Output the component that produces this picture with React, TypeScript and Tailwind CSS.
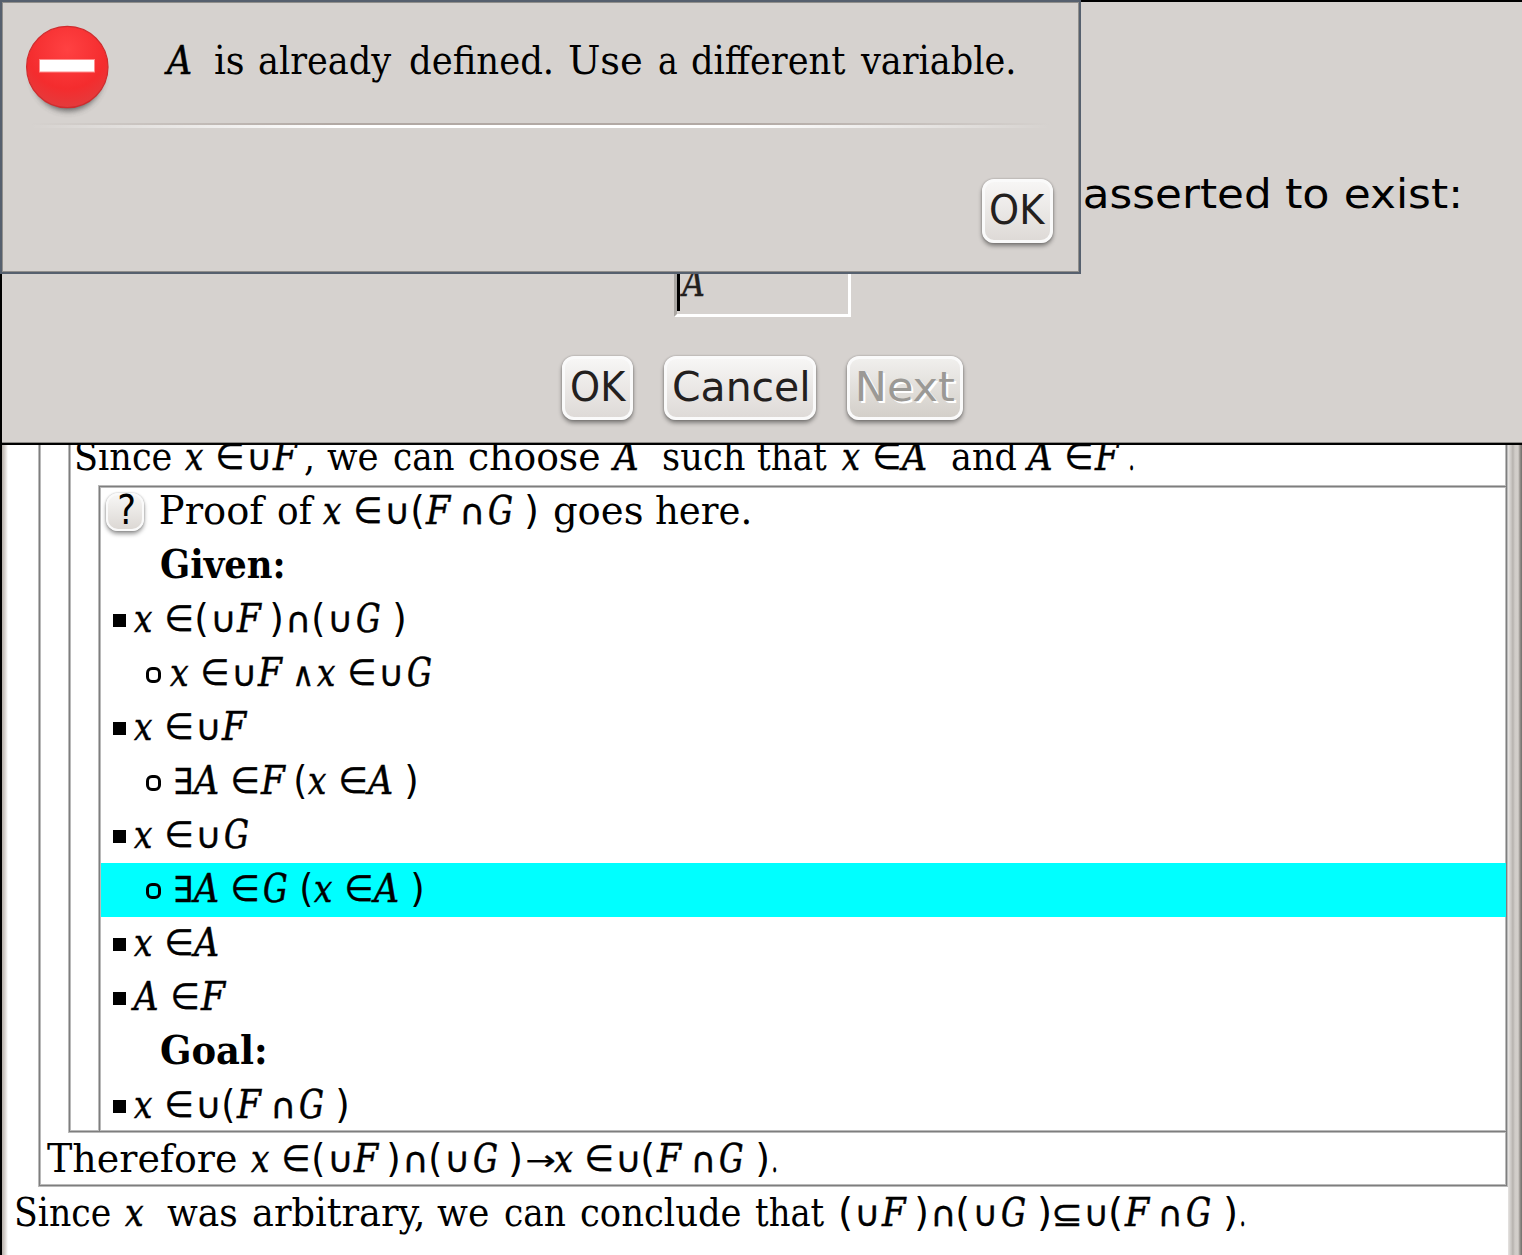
import React from "react";

type Kind = "serif" | "italic" | "bold" | "sans" | "symbol";
/** text, ink left edge, ink right edge, kind */
type Run = [string, number, number, Kind?];

const FONT: Record<Kind, string> = {
  serif: "40px 'DejaVu Serif Condensed', 'DejaVu Serif', serif",
  italic: "italic 40px 'DejaVu Serif Condensed', 'DejaVu Serif', serif",
  bold: "bold 40px 'DejaVu Serif Condensed', 'DejaVu Serif', serif",
  sans: "40px 'DejaVu Sans', sans-serif",
  symbol: "40px 'DejaVu Sans', sans-serif",
};

/** ink extents of math symbols: height above and depth below the baseline */
const EXTENT: Record<string, [number, number]> = {
  "∈": [27, 0],
  "∃": [27, 0],
  "∪": [21, 0],
  "∩": [21, 0],
  "∧": [20, 0],
  "⊆": [21.5, 0],
  "→": [17, -4],
  "(": [29.5, 6],
  ")": [29.5, 6],
};

const ITALIC = "xAFG";
const ctx = document.createElement("canvas").getContext("2d")!;

function kindOf(text: string): Kind {
  if (EXTENT[text]) return "symbol";
  if (text.length === 1 && ITALIC.includes(text)) return "italic";
  return "serif";
}

function strokeOf(text: string, kind: Kind): string {
  if (kind === "italic") return "[-webkit-text-stroke:0.5px_currentColor]";
  if (kind === "symbol" && text !== "(" && text !== ")") return "[-webkit-text-stroke:0.5px_currentColor]";
  return "";
}

function Line({ runs, from = 0, className = "" }: { runs: Run[]; from?: number; className?: string }) {
  let pen = from;
  return (
    <div className={"flex h-[54px] whitespace-pre " + className}>
      {runs.map(([text, l, r, k], i) => {
        const kind = k ?? kindOf(text);
        ctx.font = FONT[kind];
        const m = ctx.measureText(text);
        const a = Math.round(m.fontBoundingBoxAscent);
        const d = Math.round(m.fontBoundingBoxDescent);
        const base = (54 - a - d) / 2 + a;
        const sx = (r - l) / (m.actualBoundingBoxLeft + m.actualBoundingBoxRight);
        let sy = 1;
        let ty = 38 - base;
        const e = kind === "symbol" ? EXTENT[text] : undefined;
        if (e) {
          sy = (e[0] + e[1]) / (m.actualBoundingBoxAscent + m.actualBoundingBoxDescent);
          ty += e[1] - m.actualBoundingBoxDescent * sy;
        }
        const gap = l - pen;
        pen = r;
        return (
          <span key={i} className="block h-[54px] shrink-0 leading-[54px]" style={{ width: r - l, marginLeft: gap }}>
            <span
              className={"block w-max " + strokeOf(text, kind)}
              style={{
                font: FONT[kind],
                lineHeight: "54px",
                transformOrigin: `0 ${base}px`,
                transform: `translate(${m.actualBoundingBoxLeft * sx}px, ${ty}px) scale(${sx}, ${sy})`,
              }}
            >
              {text}
            </span>
          </span>
        );
      })}
    </div>
  );
}

function Given({ runs }: { runs: Run[] }) {
  return (
    <div className="flex h-[54px]">
      <span className="mt-[20px] ml-[13px] size-[13px] bg-black" />
      <Line from={126} runs={runs} />
    </div>
  );
}

function Derived({ runs, selected }: { runs: Run[]; selected?: boolean }) {
  return (
    <div className={"flex h-[54px] " + (selected ? "-mt-px mb-px ml-px bg-[#00ffff] pt-px" : "pl-px")}>
      <span className="mt-[19px] ml-[45px] h-[16px] w-[15px] rounded-[6px] border-[3px] border-black" />
      <Line from={161} runs={runs} />
    </div>
  );
}

function Button({ label, l, r, left, width, disabled }: { label: string; l: number; r: number; left: number; width: string; disabled?: boolean }) {
  return (
    <button
      className={
        "block h-[64px] shrink-0 rounded-[12px] border-[3px] border-[#fafafa] text-left shadow-[0_3px_4px_rgba(0,0,0,0.4),0_0_2px_rgba(0,0,0,0.3)] " +
        width +
        (disabled
          ? " bg-linear-to-b from-[#f0efed] to-[#d3cfc9] text-[#9b9995] [text-shadow:2px_2px_0_white]"
          : " bg-linear-to-b from-[#f7f6f5] to-[#dedad7] text-[#23201e]")
      }
    >
      <Line from={left + 3} runs={[[label, l, r, "sans"]]} className="mt-[4px]" />
    </button>
  );
}

const xIn: Run[] = [["x", 134, 152], ["∈", 166.7, 191]];

function Proof() {
  return (
    <main className="flex h-full w-full border-l-2 border-black bg-white pt-[432px]">
      <div className="-mt-[432px] h-[1255px] w-[6px] shrink-0 bg-linear-to-r from-[#b5afa9] via-[#d9d4d0] to-white" />
      <div className="w-[1500px] shrink-0">
        <section className="ml-[31px] h-[754px] w-[1468px] border-r border-b border-l border-[#7e7e7e] shadow-[-1px_1px_0_#bababa,1px_1px_0_#bababa,inset_1px_-1px_0_#bababa,inset_-1px_-1px_0_#bababa]">
          <div className="ml-[29px] h-[700px] border-b border-l border-[#7e7e7e] shadow-[-1px_1px_0_#bababa,inset_1px_-1px_0_#bababa]">
            <Line
              from={70}
              runs={[
                ["Since", 76.7, 170.7], ["x", 185.3, 203.3], ["∈", 217.7, 241.7], ["∪", 251, 268.7], ["F", 272.3, 299],
                [",", 305, 311.7], ["we", 326.7, 377], ["can", 394.3, 454.7], ["choose", 469.3, 599.5], ["A", 611.6, 638.4],
                ["such", 664.3, 745.5], ["that", 758, 827.2], ["x", 842.4, 860], ["∈", 875, 899], ["A", 899, 926],
                ["and", 952.2, 1016], ["A", 1025.5, 1052.2], ["∈", 1067, 1091], ["F", 1094.6, 1121], [".", 1130, 1133.5],
              ]}
            />
            <div className="ml-[29px] h-[645px] border-t border-l border-[#7e7e7e] shadow-[-1px_-1px_0_#bababa,inset_1px_1px_0_#bababa]">
              <div className="-mt-px flex h-[54px]">
                <div className="mt-[7px] ml-[6px] size-[38px] shrink-0 rounded-[12px] border-2 border-[#fafafa] bg-linear-to-b from-[#f7f6f5] to-[#dcd8d4] shadow-[0_3px_4px_rgba(0,0,0,0.4),0_0_2px_rgba(0,0,0,0.3)]">
                  <Line from={108} runs={[["?", 119, 134, "sans"]]} className="-mt-[9px]" />
                </div>
                <Line
                  from={144}
                  runs={[
                    ["Proof", 161.3, 266.7], ["of", 277.7, 314.3], ["x", 323, 341], ["∈", 356, 380], ["∪", 389.3, 407],
                    ["(", 413, 422.3], ["F", 425, 452], ["∩", 464.3, 482], ["G", 488, 512.3], [")", 526.8, 536.4],
                    ["goes", 553.6, 641.5], ["here.", 655.8, 749.5],
                  ]}
                />
              </div>
              <Line from={100} runs={[["Given:", 160.7, 282, "bold"]]} />
              <Given
                runs={[
                  ...xIn, ["(", 196.7, 206], ["∪", 214.7, 232.7], ["F", 236.3, 263], [")", 272.3, 281.7],
                  ["∩", 290, 307.7], ["(", 314.3, 323.3], ["∪", 332, 349.7], ["G", 356, 380], [")", 395, 404.3],
                ]}
              />
              <Derived
                runs={[
                  ["x", 170, 188.3], ["∈", 203, 227], ["∪", 236, 253.7], ["F", 257.3, 284], ["∧", 296, 311],
                  ["x", 317, 335], ["∈", 350, 374], ["∪", 383, 400.7], ["G", 407, 431.3],
                ]}
              />
              <Given runs={[...xIn, ["∪", 200, 218], ["F", 221, 248]]} />
              <Derived
                runs={[
                  ["∃", 176, 191], ["A", 191, 218], ["∈", 232.7, 257], ["F", 260.3, 287], ["(", 296, 305],
                  ["x", 308, 326], ["∈", 340.7, 365], ["A", 365, 392], [")", 407, 416.3],
                ]}
              />
              <Given runs={[...xIn, ["∪", 200, 218], ["G", 224, 248.3]]} />
              <Derived
                selected
                runs={[
                  ["∃", 176, 191], ["A", 191, 218], ["∈", 232.7, 257], ["G", 263.3, 287.3], ["(", 302, 311],
                  ["x", 314, 332], ["∈", 347, 371], ["A", 371, 398], [")", 413, 422.3],
                ]}
              />
              <Given runs={[...xIn, ["A", 191, 218]]} />
              <Given runs={[["A", 131, 157.7], ["∈", 172.7, 197], ["F", 200, 227]]} />
              <Line from={100} runs={[["Goal:", 160.7, 264, "bold"]]} />
              <Given
                runs={[
                  ...xIn, ["∪", 200, 218], ["(", 223.7, 232.7], ["F", 236.3, 263], ["∩", 275, 292.7],
                  ["G", 299, 323.3], [")", 338, 347.3],
                ]}
              />
            </div>
          </div>
          <Line
            from={40}
            className="mt-[2px]"
            runs={[
              ["Therefore", 47, 236], ["x", 251, 269], ["∈", 284, 308], ["(", 314.3, 323.3], ["∪", 331.7, 349.7],
              ["F", 353, 380], [")", 389, 398.3], ["∩", 407, 425], ["(", 431, 440], ["∪", 449, 466.7], ["G", 473, 497.3],
              [")", 511.5, 521.2], ["→", 526.9, 554], ["x", 554, 572.6], ["∈", 587, 611.4], ["∪", 619.8, 637.8],
              ["(", 643.5, 653], ["F", 656.2, 683], ["∩", 695.5, 713], ["G", 719.4, 743.3], [")", 758, 767.5], [".", 772.8, 776.4],
            ]}
          />
        </section>
        <Line
          from={8}
          className="mt-[2px]"
          runs={[
            ["Since", 16.7, 109.7], ["x", 125, 143.3], ["was", 166.7, 236], ["arbitrary,", 253.3, 422.3], ["we", 437.3, 488.3],
            ["can", 505, 565.7], ["conclude", 581, 740.3], ["that", 755.7, 824.4], ["(", 841.3, 851], ["∪", 859.2, 877],
            ["F", 881.6, 908], [")", 917, 926.4], ["∩", 934.8, 952.7], ["(", 958, 967.5], ["∪", 977, 994.5], ["G", 1001, 1025.4],
            [")", 1040.3, 1050], ["⊆", 1054.5, 1080], ["∪", 1088.6, 1106], ["(", 1111.3, 1121], ["F", 1124, 1151],
            ["∩", 1162.7, 1180], ["G", 1186, 1210.5], [")", 1225.8, 1235.5], [".", 1240.8, 1244.4],
          ]}
        />
      </div>
      <div className="-mt-[432px] h-[1255px] w-[14px] shrink-0 bg-[linear-gradient(to_right,#e6e4e2,#c0bcb8_30%,#b5b1ad_34%,#d0ccc8_50%,#d3cfcb_72%,#98948f_85%,#6f6c69)]" />
    </main>
  );
}

function StopIcon() {
  return (
    <svg className="absolute top-[20px] left-[20px]" width="96" height="100" viewBox="20 20 96 100">
      <defs>
        <radialGradient id="red" cx="0.5" cy="0.28" r="0.75">
          <stop offset="0" stopColor="#ff4142" />
          <stop offset="0.65" stopColor="#f42c2e" />
          <stop offset="1" stopColor="#e23d3e" />
        </radialGradient>
        <filter id="soft" x="-20%" y="-20%" width="140%" height="140%">
          <feGaussianBlur stdDeviation="3" />
        </filter>
      </defs>
      <ellipse cx="68" cy="75" rx="35" ry="36" fill="#444" opacity="0.8" filter="url(#soft)" />
      <circle cx="67.3" cy="67" r="40.7" fill="url(#red)" stroke="#d02c2e" strokeWidth="1.2" />
      <rect x="39.5" y="59.5" width="55" height="12.5" fill="white" stroke="#ff8c8c" strokeWidth="1" />
    </svg>
  );
}

export default function App() {
  return (
    <div className="relative h-[1255px] w-[1522px] overflow-hidden bg-white text-black">
      <Proof />

      <div className="absolute top-0 left-0 h-[445px] w-[1522px] border-t-2 border-b-2 border-l-2 border-black bg-[#d6d2cf] shadow-[inset_0_-1px_0_#8c8a87]">
        <Line
          from={2}
          className="mt-[168px]"
          runs={[["asserted", 1085, 1268, "sans"], ["to", 1286, 1328, "sans"], ["exist:", 1346, 1458, "sans"]]}
        />
        <div className="mt-[31px] ml-[672px] flex h-[62px] w-[177px] border-r-[3px] border-b-[3px] border-l-[3px] border-r-white border-b-white border-l-[#aaa6a2] text-[#23201e]">
          <span className="mt-[10px] h-[46px] w-[3px] shrink-0 bg-black" />
          <Line from={680} className="mt-[3px]" runs={[["A", 680, 704]]} />
        </div>
        <div className="mt-[39px] ml-[560px] flex">
          <Button label="OK" l={572} r={627} left={562} width="w-[71px]" />
          <div className="w-[31px]" />
          <Button label="Cancel" l={673.5} r={807} left={664} width="w-[152px]" />
          <div className="w-[31px]" />
          <Button label="Next" l={857.5} r={953.6} left={847} width="w-[116px]" disabled />
        </div>
      </div>

      <div className="absolute top-0 left-0 h-[274px] w-[1081px] border-2 border-[#56606e] bg-[#d6d2cf] shadow-[inset_0_0_0_1px_#918f8c]">
        <div className="absolute -top-[2px] -left-[2px]">
          <StopIcon />
        </div>
        <Line
          from={2}
          className="mt-[34px]"
          runs={[
            ["A", 164, 191], ["is", 215, 243], ["already", 259.3, 392], ["defined.", 409.8, 551.5], ["Use", 569.3, 641.8],
            ["a", 658.6, 677], ["different", 691.8, 845.7], ["variable.", 859.6, 1013.6],
          ]}
        />
        <div className="mt-[33px] ml-[28px] h-[2px] w-[1020px] bg-[linear-gradient(to_right,transparent,#b2a9a4_30%,#b2a9a4_70%,transparent)]" />
        <div className="ml-[28px] h-[3px] w-[1020px] bg-[linear-gradient(to_right,transparent,white_30%,white_70%,transparent)]" />
        <div className="mt-[51px] ml-[980px] flex">
          <Button label="OK" l={991} r={1046} left={982} width="w-[71px]" />
        </div>
      </div>
    </div>
  );
}
